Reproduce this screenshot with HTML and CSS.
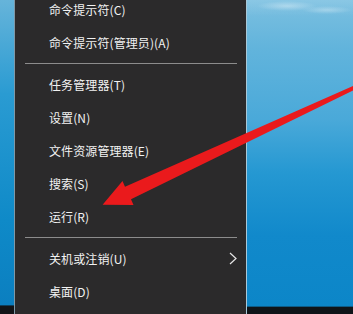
FILE: index.html
```html
<!DOCTYPE html>
<html lang="zh-CN">
<head>
  <meta charset="UTF-8">
  <title>Win+X 菜单</title>
  <link rel="stylesheet" href="styles.css">
</head>
<body>
  <div class="screen">
    <div class="desktop-edge"></div>

    <div class="menu">
      <div class="menu-list">
        <div class="menu-item">命令提示符(C)</div>
        <div class="menu-item">命令提示符(管理员)(A)</div>
        <div class="separator"></div>
        <div class="menu-item">任务管理器(T)</div>
        <div class="menu-item">设置(N)</div>
        <div class="menu-item">文件资源管理器(E)</div>
        <div class="menu-item">搜索(S)</div>
        <div class="menu-item">运行(R)</div>
        <div class="separator"></div>
        <div class="menu-item has-sub">
          <span>关机或注销(U)</span>
          <svg class="chevron" width="8" height="13" viewBox="0 0 8 13">
            <polyline points="1,1 7,6.5 1,12" fill="none" stroke="#e6e6e6" stroke-width="1.2"/>
          </svg>
        </div>
        <div class="menu-item">桌面(D)</div>
      </div>
    </div>

    <div class="desktop">
      <div class="water"></div>
    </div>

    <!-- red annotation arrow drawn over everything -->
    <svg class="arrow" width="353" height="314" viewBox="0 0 353 314">
      <polygon fill="#ea1a1c"
        points="102.6,204.8 122.5,181 125,186.8 359.2,83.2 360.8,86.8 131,199.2 133.5,205"/>
    </svg>
  </div>
</body>
</html>
```

FILE: styles.css
```css
body {
  margin: 0;
  padding: 0;
  background: #2b2a2b;
  font-family: "Noto Sans CJK SC", "Noto Sans", sans-serif;
}

.screen {
  position: relative;
  display: flex;
  width: 353px;
  height: 314px;
  overflow: hidden;
}

.desktop-edge {
  width: 14px;
  flex-shrink: 0;
  background: linear-gradient(180deg, #66b4da 0%, #2a9bd2 30%, #0f8ac8 70%, #0b7fc0 97%, #121417 97.5%);
  border-right: 1px solid #7f98a6;
}

.menu {
  width: 231px;
  flex-shrink: 0;
  background: #2b2a2b;
  border-right: 1px solid #a8c8d8;
}

.menu-list {
  margin-top: -7px;
  display: flex;
  flex-direction: column;
}

.menu-item {
  height: 33px;
  display: flex;
  align-items: center;
  justify-content: space-between;
  padding-left: 34px;
  padding-right: 9px;
  font-size: 12px;
  color: #f2f2f2;
  letter-spacing: 0.1px;
}

.separator {
  height: 1px;
  margin: 4px 9px 4px 10px;
  background: #8c8c8c;
}

.chevron {
  display: block;
}

.desktop {
  flex: 1;
  position: relative;
  background: linear-gradient(180deg, #7cc0e0 0%, #62b4dc 15%, #4aa9d9 38%, #2598d2 55%, #1189cb 75%, #0c86c8 97.5%, #0f1418 97.8%);
}

.water {
  height: 16px;
  background:
    radial-gradient(ellipse 30px 5px at 40px 6px, rgba(255, 255, 255, 0.35), transparent),
    radial-gradient(ellipse 25px 4px at 80px 10px, rgba(255, 255, 255, 0.3), transparent),
    linear-gradient(180deg, rgba(160, 210, 235, 0.4), transparent);
}

.arrow {
  position: absolute;
  left: 0;
  top: 0;
  pointer-events: none;
}
```
